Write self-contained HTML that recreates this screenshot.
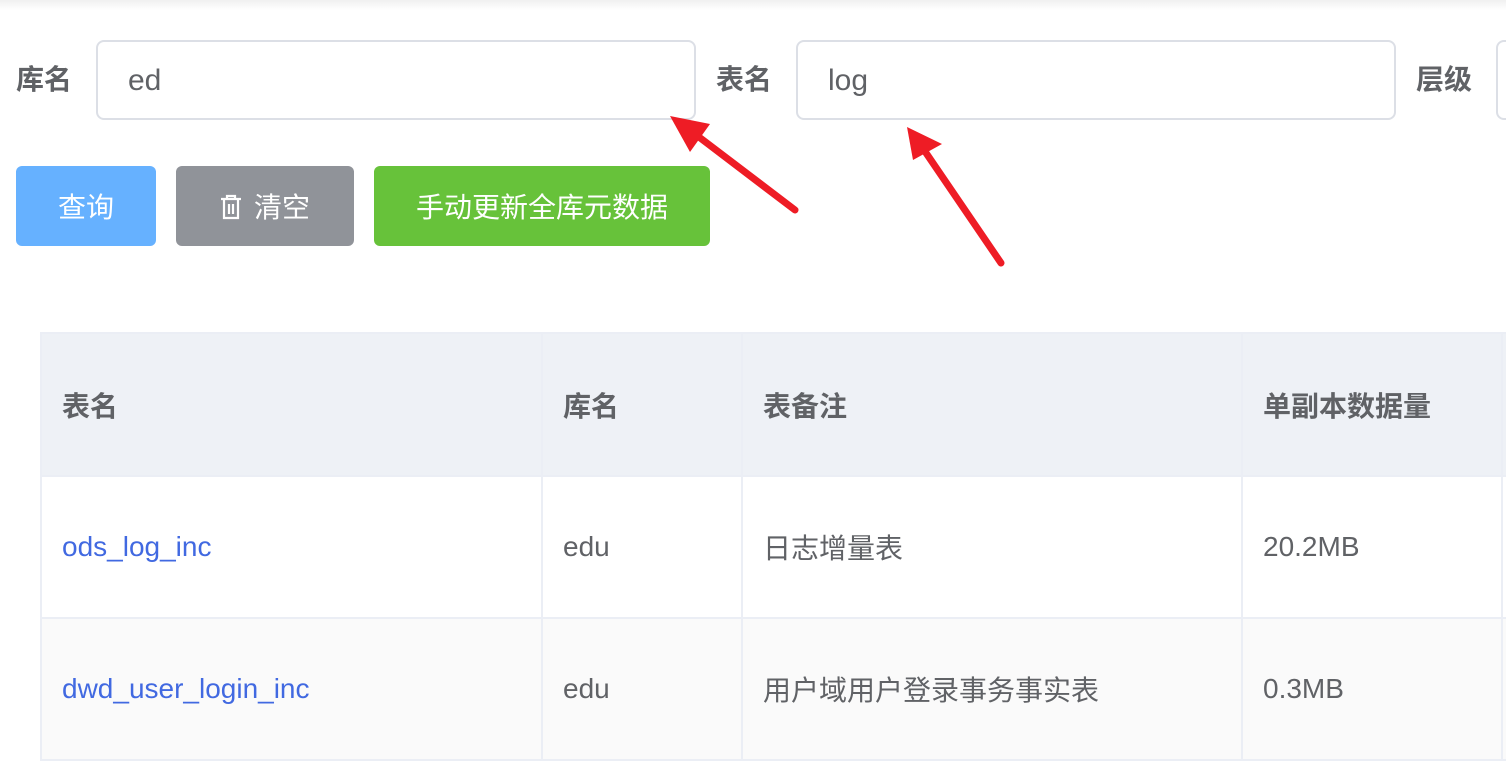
<!DOCTYPE html>
<html><head><meta charset="utf-8"><style>
body{margin:0;width:1506px;height:762px;overflow:hidden;background:#fff;font-family:"Liberation Sans","Noto Sans CJK SC",sans-serif;position:relative}
.top{position:absolute;left:0;top:0;width:1506px;height:10px;background:linear-gradient(#f0f0f0,#fff)}
.lbl{position:absolute;top:62px;font-size:28px;font-weight:bold;color:#606266;line-height:36px}
.inp{position:absolute;top:40px;height:76px;border:2px solid #dcdfe6;border-radius:8px;box-sizing:content-box;font-size:30px;color:#606266;line-height:78px;padding-left:30px}
.btn{position:absolute;top:166px;height:80px;border-radius:6px;color:#fff;font-size:28px;line-height:84px;text-align:center}
table{position:absolute;left:40px;top:332px;border-collapse:collapse;font-size:28px;color:#606266;table-layout:fixed;width:1483px}
td,th{border:2px solid #ebeef5;padding:0 0 0 20px;text-align:left;box-sizing:border-box;white-space:nowrap;overflow:hidden}
th{background:#eef1f6;font-weight:bold;height:143px}
td{height:142px}
a{color:#4169e1;text-decoration:none}
</style></head><body>
<div class="top"></div>
<div class="lbl" style="left:16px">库名</div>
<div class="inp" style="left:96px;width:566px">ed</div>
<div class="lbl" style="left:716px">表名</div>
<div class="inp" style="left:796px;width:566px">log</div>
<div class="lbl" style="left:1416px">层级</div>
<div class="inp" style="left:1496px;width:40px"></div>
<div class="btn" style="left:16px;width:140px;background:#66b1ff">查询</div>
<div class="btn" style="left:176px;width:178px;background:#909399"><svg width="22" height="26" viewBox="0 0 22 26" style="vertical-align:-3px;margin-right:12px"><path d="M1 5h20M7 5V2h8v3M4 5v19h14V5M9 10v10M13 10v10" fill="none" stroke="#fff" stroke-width="2.2"/></svg>清空</div>
<div class="btn" style="left:374px;width:336px;background:#67c23a">手动更新全库元数据</div>
<table>
<colgroup><col style="width:501px"><col style="width:200px"><col style="width:500px"><col style="width:260px"><col style="width:22px"></colgroup>
<tr><th>表名</th><th>库名</th><th>表备注</th><th>单副本数据量</th><th></th></tr>
<tr><td><a>ods_log_inc</a></td><td>edu</td><td>日志增量表</td><td>20.2MB</td><td></td></tr>
<tr style="background:#fafafa"><td><a>dwd_user_login_inc</a></td><td>edu</td><td>用户域用户登录事务事实表</td><td>0.3MB</td><td></td></tr>
</table>
<svg style="position:absolute;left:0;top:0" width="1506" height="762">
<g stroke="#ee1c25" stroke-width="7" stroke-linecap="round" fill="#ee1c25">
<line x1="795" y1="210" x2="695" y2="134"/>
<line x1="1001" y1="263" x2="922" y2="147"/>
</g>
<polygon points="670,116 710,124 690,152" fill="#ee1c25"/>
<polygon points="907,127 942,144 913,160" fill="#ee1c25"/>
</svg>
</body></html>
